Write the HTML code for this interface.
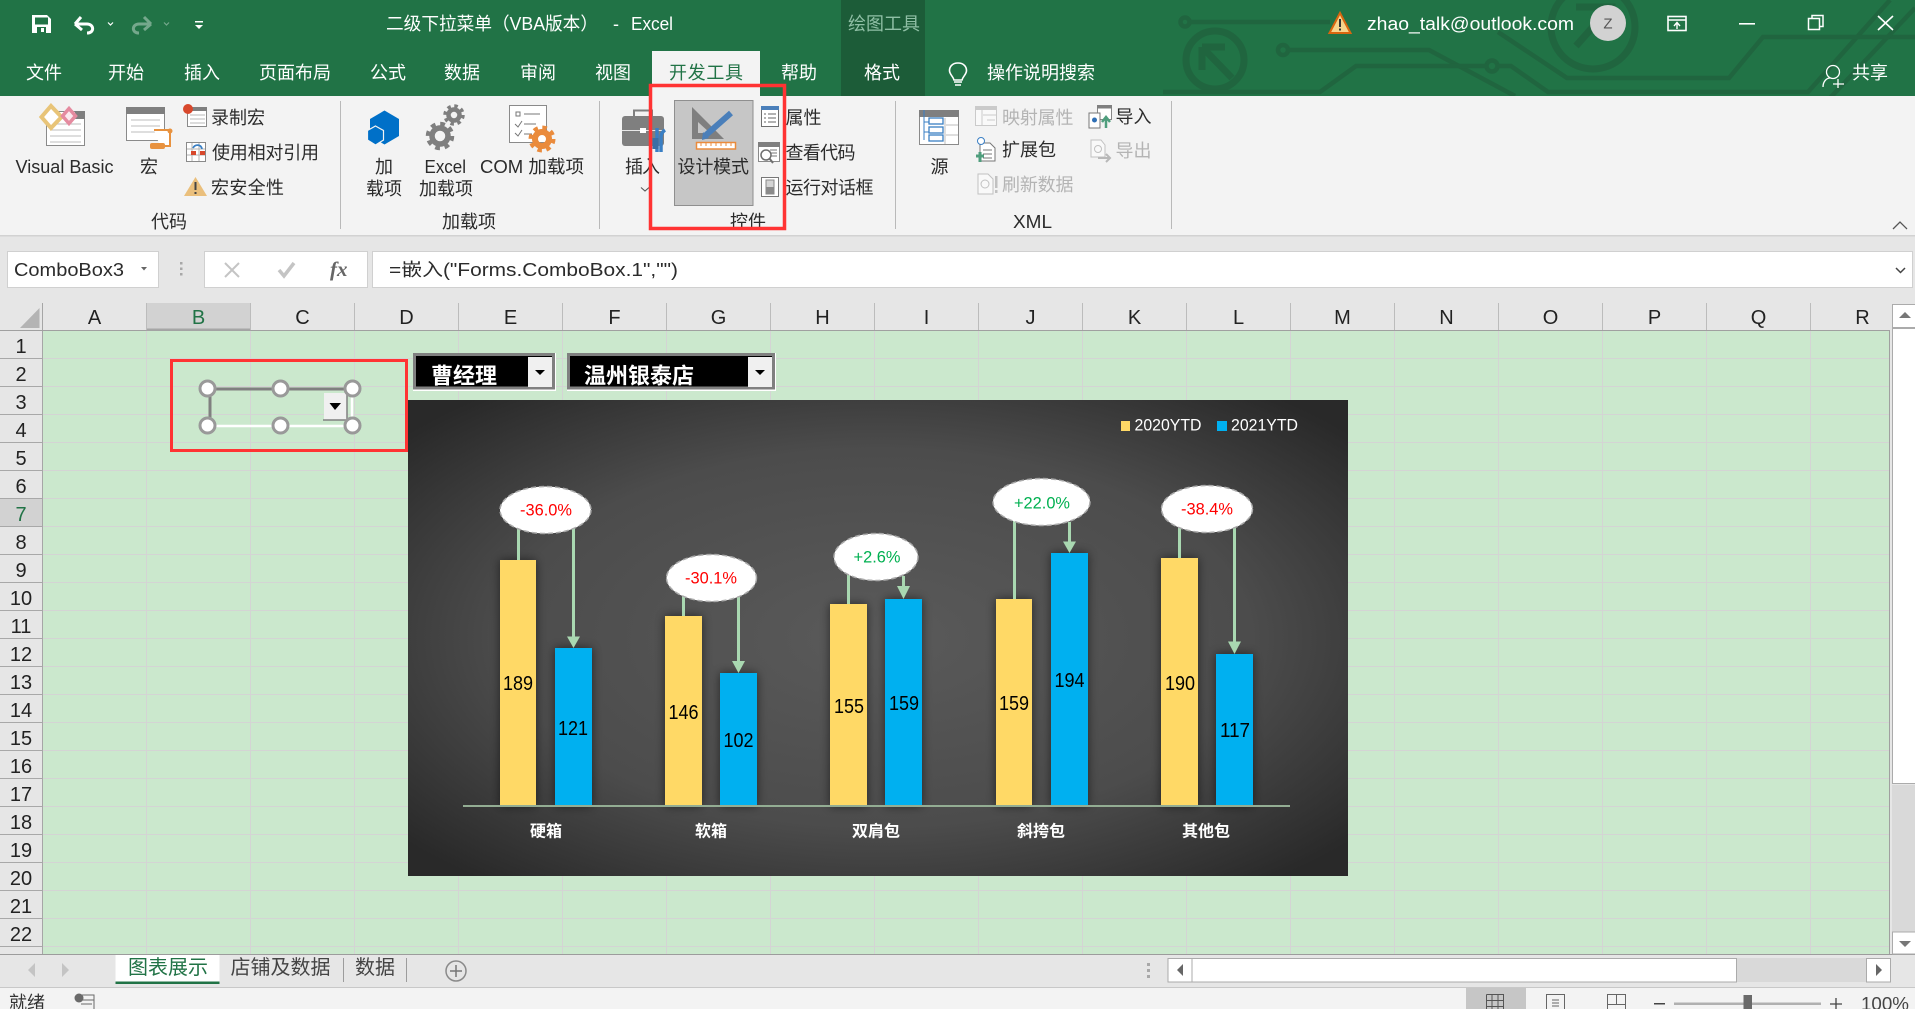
<!DOCTYPE html>
<html><head><meta charset="utf-8"><title>Excel</title>
<style>
html,body{margin:0;padding:0;background:#e6e6e6;overflow:hidden}
svg{display:block}
text{font-family:"Liberation Sans","Noto Sans CJK SC",sans-serif;dominant-baseline:central;fill:#2b2b2b;font-size:18px}
.w{fill:#fff}.g{fill:#b4b4b4}
.h{font-size:20px;text-anchor:middle;fill:#222}
.v{font-size:20px;fill:#000}
.c{font-size:16px;font-weight:700;fill:#fff}
.p{font-size:17px}
.ln{fill:none;stroke:#20653f;stroke-width:4.5}
.cn{stroke:#a9d8b1;stroke-width:3;fill:none}
.ah{fill:#a9d8b1}
.el{fill:#fff;stroke:#aaa;stroke-width:1.5;stroke-dasharray:5 3}
.hd{fill:#fff;stroke:#999;stroke-width:3}
</style></head><body>
<svg width="1915" height="1009" viewBox="0 0 1915 1009" xmlns="http://www.w3.org/2000/svg">
<defs>
<pattern id="grid" x="43" y="331" width="104" height="28" patternUnits="userSpaceOnUse">
<rect width="104" height="28" fill="#cbe8cd"/>
<rect y="27" width="104" height="1" fill="#d4d4d4"/>
<rect x="103" width="1" height="28" fill="#d4d4d4"/>
</pattern>
<radialGradient id="chartbg" cx=".5" cy=".5" r=".66">
<stop offset="0" stop-color="#5a5a5a"/><stop offset=".6" stop-color="#4c4c4c"/><stop offset="1" stop-color="#292929"/>
</radialGradient>
<filter id="sh" x="-40%" y="-10%" width="180%" height="115%"><feDropShadow dx="0" dy="0" stdDeviation="5" flood-color="#000" flood-opacity=".55"/></filter>
<clipPath id="gc"><rect x="0" y="0" width="1915" height="96"/></clipPath>
</defs>

<!-- base -->
<rect width="1915" height="1009" fill="#e6e6e6"/>
<!-- title bar -->
<rect width="1915" height="96" fill="#217346"/>
<g clip-path="url(#gc)">
<circle class="ln" cx="1185" cy="22" r="4.5"/>
<path class="ln" d="M1190 22H1330"/>
<circle class="ln" cx="1215" cy="60" r="29" style="stroke-width:7"/>
<path class="ln" style="stroke-width:7" d="M1202 47H1225M1202 47V70M1202 47L1232 78"/>
<circle class="ln" cx="1283" cy="50" r="5"/>
<path class="ln" d="M1288 50H1429L1515 96"/>
<circle class="ln" cx="1492" cy="66" r="5.5"/>
<path class="ln" d="M1163 92H1320L1356 66H1487M1497 66H1511L1548 92H1808L1890 0"/>
<path class="ln" d="M1498 32L1567 78H1729L1763 37H1915"/>
<path class="ln" d="M1830 98L1915 8"/>
<circle class="ln" style="stroke-width:7" cx="1593" cy="27" r="42"/>
<path class="ln" style="stroke-width:7" d="M1576 7H1612V40M1606 12L1576 46"/>
</g>
<rect x="841" width="84" height="96" fill="#1c5c38"/>
<rect x="652" y="51" width="108" height="45" fill="#f3f3f3"/>

<!-- QAT -->
<path d="M32 15H47L51 19V33H32Z" fill="#fff"/><rect x="35" y="17.500" width="13" height="7" fill="#217346"/><rect x="37" y="27" width="9" height="6" fill="#217346"/><rect x="41" y="28" width="3" height="4" fill="#fff"/>
<path d="M76 26L82 19M76 26H88C95 26 96 35 88 35" transform="translate(-1 -2)" fill="none" stroke="#fff" stroke-width="3"/><path d="M75 24L82 30" fill="none" stroke="#fff" stroke-width="3"/>
<path d="M108 22.500L110.500 25L113 22.500" fill="none" stroke="#fff" stroke-width="1.200"/>
<g opacity=".38"><path d="M151 24L144 17M151 24H139C132 24 131 33 139 33M151 24L144 30" fill="none" stroke="#fff" stroke-width="3"/>
<path d="M164 22.500L166.500 25L169 22.500" fill="none" stroke="#fff" stroke-width="1.200"/></g>
<rect x="195" y="21" width="8" height="1.500" fill="#fff"/><path d="M195 25H203L199 29Z" fill="#fff"/>

<!-- title text -->
<text class="w" x="386" y="24" textLength="212" lengthAdjust="spacingAndGlyphs">二级下拉菜单（VBA版本）</text>
<text class="w" x="613" y="24">-</text>
<text class="w" x="631" y="24" textLength="42" lengthAdjust="spacingAndGlyphs">Excel</text>
<text x="848" y="24" style="fill:#8fbfa5" textLength="72">绘图工具</text>
<!-- warning -->
<path d="M1340 13L1350.500 33H1329.500Z" fill="#f7d48b" stroke="#d9660f" stroke-width="2"/><rect x="1339" y="19" width="2" height="8" fill="#333"/><rect x="1339" y="28.500" width="2" height="2" fill="#333"/>
<text class="w" x="1367" y="24" textLength="207" lengthAdjust="spacingAndGlyphs">zhao_talk@outlook.com</text>
<ellipse cx="1608" cy="23" rx="18" ry="18" fill="#d2d2d2"/>
<text x="1608" y="24" style="fill:#555;text-anchor:middle;font-size:15px">Z</text>
<!-- window controls -->
<rect x="1668" y="16.500" width="18" height="14" fill="none" stroke="#fff" stroke-width="1.600"/><path d="M1668 20H1686" stroke="#fff" stroke-width="1.600"/><path d="M1677 29V23M1674 26L1677 22.500L1680 26" fill="none" stroke="#fff" stroke-width="1.400"/>
<rect x="1739" y="23" width="16" height="1.600" fill="#fff"/>
<rect x="1808.500" y="18.500" width="11" height="11" fill="none" stroke="#fff" stroke-width="1.500"/><path d="M1812 18V15.500H1823V26.500H1820" fill="none" stroke="#fff" stroke-width="1.500"/>
<path d="M1878 16L1893 30M1893 16L1878 30" stroke="#fff" stroke-width="1.600"/>

<!-- menu -->
<g class="m">
<text class="w" x="26" y="73">文件</text>
<text class="w" x="108" y="73">开始</text>
<text class="w" x="184" y="73">插入</text>
<text class="w" x="259" y="73">页面布局</text>
<text class="w" x="370" y="73">公式</text>
<text class="w" x="444" y="73">数据</text>
<text class="w" x="520" y="73">审阅</text>
<text class="w" x="595" y="73">视图</text>
<text x="669" y="73" style="fill:#217346" textLength="74">开发工具</text>
<text class="w" x="781" y="73">帮助</text>
<text class="w" x="864" y="73">格式</text>
<text class="w" x="987" y="73">操作说明搜索</text>
<text class="w" x="1852" y="73">共享</text>
</g>
<path d="M958 63C952 63 949.500 67 949.500 70.500C949.500 74.500 953 76 954 80H962C963 76 966.500 74.500 966.500 70.500C966.500 67 964 63 958 63Z" fill="none" stroke="#fff" stroke-width="1.600"/><path d="M954 82H962M955 85H961" stroke="#fff" stroke-width="1.500"/>
<circle cx="1833" cy="72" r="6.500" fill="none" stroke="#fff" stroke-width="1.300"/><path d="M1823 87C1823 81 1827 78 1830 78" fill="none" stroke="#fff" stroke-width="1.300"/><path d="M1838 84H1844M1838 79V88M1833 84H1844" stroke="#fff" stroke-width="1.300"/>

<!-- ribbon -->
<rect y="96" width="1915" height="139" fill="#f3f3f3"/>
<rect y="235" width="1915" height="1.500" fill="#d2d2d2"/>
<g fill="#b9b9b9">
<rect x="340" y="101" width="1" height="128"/><rect x="599" y="101" width="1" height="128"/><rect x="895" y="101" width="1" height="128"/><rect x="1171" y="101" width="1" height="128"/>
</g>

<!-- Visual Basic icon -->
<rect x="46.500" y="111.500" width="38" height="34" fill="#fff" stroke="#8a8a8a"/><rect x="75" y="111" width="10" height="8" fill="#7f7f7f"/>
<path d="M50 124H81M50 130H81M50 136H81M50 142H81" stroke="#bdbdbd"/>
<path d="M51 106L61.500 117L51 128L41.500 117Z" fill="#fff" stroke="#e8c478" stroke-width="4"/>
<path d="M69 108.500L75.500 116L69 123.500L62.500 116Z" fill="#fbe9ee" stroke="#e58ba0" stroke-width="3.500"/>
<!-- Macro icon -->
<rect x="126.500" y="107.500" width="38" height="33" fill="#fff" stroke="#8a8a8a"/><rect x="126" y="107" width="39" height="7" fill="#7f7f7f"/>
<path d="M131 120H160M131 126H160M131 132H160" stroke="#bdbdbd"/>
<path d="M154 130H170V146H160" fill="#fff" stroke="#e8923f" stroke-width="2"/><rect x="150" y="143" width="15" height="6" rx="2" fill="#e8923f"/>
<circle cx="170" cy="131" r="2.500" fill="#e8923f"/>
<!-- Record -->
<rect x="187.500" y="108.500" width="19" height="18" fill="#fff" stroke="#8a8a8a"/><rect x="187" y="107" width="20" height="4" fill="#7f7f7f"/><path d="M190 115H205M190 119H205M190 123H205" stroke="#b8b8b8"/>
<circle cx="188" cy="109" r="5" fill="#d8482c"/>
<text x="211" y="118" textLength="54">录制宏</text>
<!-- Relative -->
<rect x="186.500" y="142.500" width="19" height="19" fill="#fff" stroke="#8a8a8a"/><path d="M192 143V161M199 143V161M187 149H205M187 155H205" stroke="#b3b3b3"/>
<rect x="191" y="151" width="5" height="4" fill="#d8482c"/><rect x="200" y="151" width="5" height="4" fill="#d8482c"/>
<path d="M193 148C195 144 201 144 202 149" fill="none" stroke="#3a7fc4" stroke-width="1.800"/>
<text x="212" y="153" textLength="107">使用相对引用</text>
<!-- Warning -->
<path d="M195.500 177L207 196H184Z" fill="#eabf7c"/><rect x="194.500" y="182" width="2" height="8" fill="#444"/><rect x="194.500" y="192" width="2" height="2" fill="#444"/>
<text x="211" y="188" textLength="73">宏安全性</text>
<text x="15.500" y="167" textLength="98" lengthAdjust="spacingAndGlyphs">Visual Basic</text>
<text x="140" y="167">宏</text>
<text x="151" y="222">代码</text>

<!-- Add-ins -->
<path d="M384.500 110.500L399 119V136L384.500 144.500L370 136V119Z" fill="#0070c8"/>
<path d="M375.500 126L383.500 130.500V140L375.500 145L367.500 140V130.500Z" fill="#0070c8" stroke="#f3f3f3" stroke-width="1.200"/>
<text x="375" y="167">加</text><text x="366" y="189">载项</text>
<g fill="none" stroke="#7f7f7f">
<circle cx="440" cy="136" r="8" stroke-width="5.500"/><circle cx="440" cy="136" r="12" stroke-width="4.500" stroke-dasharray="4.700 4.700"/>
<circle cx="454" cy="115" r="5.500" stroke-width="4.500"/><circle cx="454" cy="115" r="9" stroke-width="3.500" stroke-dasharray="3.500 3.570"/>
</g>
<text x="424.500" y="167" textLength="41.500" lengthAdjust="spacingAndGlyphs">Excel</text><text x="419" y="189">加载项</text>
<rect x="509.500" y="105.500" width="37" height="37" fill="#fff" stroke="#8a8a8a"/>
<rect x="516" y="112" width="4" height="4" fill="#fff" stroke="#777"/><path d="M524 114H540M524 124H536M524 134H532" stroke="#777"/>
<path d="M515 124L518 127L522 121M515 133L518 136L522 130" fill="none" stroke="#777"/>
<g fill="none" stroke="#ea8b3c"><circle cx="542" cy="139" r="7" stroke-width="6"/><circle cx="542" cy="139" r="11.500" stroke-width="4" stroke-dasharray="4.500 4.530"/></g>
<text x="480" y="167" textLength="104" lengthAdjust="spacingAndGlyphs">COM 加载项</text>
<text x="442" y="222">加载项</text>

<!-- Controls -->
<rect x="622" y="116" width="42" height="30" rx="3" fill="#7f7f7f"/><path d="M634 116V110.500H652V116" fill="none" stroke="#7f7f7f" stroke-width="2"/><rect x="622" y="130" width="42" height="1" fill="#e8e8e8"/><rect x="640" y="128" width="6" height="5" fill="#fff"/>
<path d="M657 128V152M665 130C662 132 661 134 661 137V152" fill="none" stroke="#3a7fc4" stroke-width="3.500"/><rect x="652.500" y="138" width="6" height="11" fill="#3a6fa5"/>
<text x="625" y="167" textLength="35">插入</text>
<path d="M641 187.500L645 191L649 187.500" fill="none" stroke="#555" stroke-width="1.100"/>
<rect x="674.500" y="100.500" width="78.500" height="105" fill="#c6c6c6" stroke="#8f8f8f"/>
<path fill-rule="evenodd" d="M692 107V139H724ZM698 122V133H710Z" fill="#7f7f7f"/>
<path d="M706 135L731 113" stroke="#4a7fba" stroke-width="6"/><path d="M702 140L703 132L709 138Z" fill="#4a7fba"/>
<rect x="696.500" y="142.500" width="39" height="6.500" fill="#fff" stroke="#ea8b3c" stroke-width="1.500"/><path d="M701 143V146M706 143V146M711 143V146M716 143V146M721 143V146M726 143V146M731 143V146" stroke="#ea8b3c"/>
<text x="677.500" y="167" textLength="71.500">设计模式</text>
<rect x="761.500" y="106.500" width="17" height="20" fill="#fff" stroke="#6f6f6f"/><rect x="761" y="106" width="18" height="4" fill="#4a7fba"/><path d="M764 114H766M768 114H776M764 118H766M768 118H776M764 122H766M768 122H776" stroke="#666"/>
<rect x="758.500" y="142.500" width="21" height="19" fill="#fff" stroke="#8a8a8a"/><rect x="758" y="142" width="22" height="5" fill="#7f7f7f"/><path d="M770 150H777M770 153H777M770 156H777" stroke="#777"/>
<circle cx="766" cy="155" r="5" fill="#fff" stroke="#6f6f6f" stroke-width="1.500"/><path d="M769.500 158.500L773 163" stroke="#6f6f6f" stroke-width="2"/>
<rect x="761.500" y="177.500" width="17" height="19" fill="#fff" stroke="#777"/><rect x="766" y="180" width="8" height="14" fill="#d4d4d4" stroke="#888"/><rect x="766" y="187" width="8" height="7" fill="#8a8a8a"/>
<text x="785.500" y="118">属性</text>
<text x="785.500" y="153" textLength="70">查看代码</text>
<text x="785.500" y="188" textLength="88">运行对话框</text>
<text x="730" y="222">控件</text>

<!-- XML -->
<rect x="919.500" y="110.500" width="39" height="34" fill="#fff" stroke="#8a8a8a"/><rect x="919" y="110" width="40" height="7" fill="#7f7f7f"/>
<path d="M945 118V144M946 125H958M946 135H958" stroke="#bdbdbd"/>
<path d="M924 110V140M924 122H929M924 132H929" stroke="#3a7fc4"/>
<g fill="#fff" stroke="#3a7fc4" stroke-width="1.300"><rect x="929" y="118" width="14" height="6"/><rect x="929" y="127" width="14" height="6"/><rect x="929" y="135" width="14" height="6"/></g>
<text x="930.500" y="167">源</text>
<g opacity=".55">
<rect x="975.500" y="106.500" width="21" height="19" fill="#fff" stroke="#aaa"/><rect x="975" y="106" width="22" height="4" fill="#aaa"/><path d="M982 110V126M983 115H997M987 120H995" stroke="#aaa"/>
</g>
<text class="g" x="1002" y="118" textLength="71.500">映射属性</text>
<path d="M980 143H990L995 148V161H980Z" fill="#fff" stroke="#777"/><path d="M983 150H992M983 154H992M983 158H992" stroke="#777"/><circle cx="981" cy="141" r="3.500" fill="#fff" stroke="#3a7fc4"/><path d="M976 156H984M980 152V162" stroke="#4f9e7d" stroke-width="3"/>
<text x="1002" y="150">扩展包</text>
<g opacity=".55"><path d="M978 174H988L993 179V194H978Z" fill="#fff" stroke="#999"/><circle cx="985" cy="184" r="4" fill="none" stroke="#999"/><rect x="995" y="176" width="2.500" height="12" fill="#999"/><rect x="995" y="190" width="2.500" height="3" fill="#999"/></g>
<text class="g" x="1002" y="185" textLength="71.500">刷新数据</text>
<rect x="1097.500" y="105.500" width="14" height="14" fill="#fff" stroke="#888"/><rect x="1097" y="105" width="15" height="3.500" fill="#7f7f7f"/><path d="M1089 113H1100V128H1089Z" fill="#fff" stroke="#777"/><circle cx="1094.500" cy="120" r="2.500" fill="#2f6fb5"/><path d="M1106 128V118M1102 122L1106 117L1110 122" fill="none" stroke="#4f9e7d" stroke-width="2.500"/>
<text x="1115.500" y="117">导入</text>
<g opacity=".55"><path d="M1091 140H1101L1105 145V157H1091Z" fill="#fff" stroke="#999"/><circle cx="1098" cy="149" r="3.500" fill="none" stroke="#999"/><path d="M1098 158H1109M1106 154L1110 158L1106 162" fill="none" stroke="#888" stroke-width="2"/></g>
<text class="g" x="1115.500" y="151">导出</text>
<text x="1013" y="222" textLength="39" lengthAdjust="spacingAndGlyphs">XML</text>
<path d="M1893 229L1900 222L1907 229" fill="none" stroke="#555" stroke-width="1.300"/>

<!-- Formula bar -->
<rect x="7.500" y="251.500" width="151" height="36" fill="#fff" stroke="#d0d0d0"/>
<text x="14" y="270" textLength="110" lengthAdjust="spacingAndGlyphs">ComboBox3</text>
<path d="M141 267H147L144 270.500Z" fill="#666"/>
<rect x="180" y="262" width="2.500" height="2.500" fill="#a8a8a8"/><rect x="180" y="267.500" width="2.500" height="2.500" fill="#a8a8a8"/><rect x="180" y="273" width="2.500" height="2.500" fill="#a8a8a8"/>
<rect x="204.500" y="251.500" width="163" height="36" fill="#fff" stroke="#d0d0d0"/>
<path d="M225 263L239 277M239 263L225 277" stroke="#c4c4c4" stroke-width="2"/>
<path d="M279 270L284 276L294 263" fill="none" stroke="#c4c4c4" stroke-width="3.500"/>
<text x="330" y="269" style="font-family:'Liberation Serif',serif;font-style:italic;font-weight:700;font-size:21px;fill:#666">fx</text>
<rect x="372.500" y="251.500" width="1540" height="36" fill="#fff" stroke="#d0d0d0"/>
<text x="389" y="270" textLength="289" lengthAdjust="spacingAndGlyphs">=嵌入("Forms.ComboBox.1","")</text>
<path d="M1896 268L1900.500 272.500L1905 268" fill="none" stroke="#444" stroke-width="1.500"/>

<!-- Sheet headers -->
<rect x="0" y="303" width="1890" height="28" fill="#e6e6e6"/>
<rect x="146" y="303" width="105" height="27" fill="#d2d2d2"/>
<rect x="0" y="499" width="42" height="28" fill="#d2d2d2"/>
<path d="M39.500 308V328H20Z" fill="#b4b4b4"/>
<!-- grid -->
<rect x="43" y="331" width="1846" height="623" fill="url(#grid)"/>
<rect x="42" y="303" width="1" height="652" fill="#a6a6a6"/>
<rect x="0" y="330" width="1890" height="1" fill="#a0a0a0"/>
<rect x="146" y="328.500" width="105" height="2" fill="#a6a6a6"/>
<rect x="1889" y="330" width="1" height="625" fill="#a0a0a0"/>
<rect x="0" y="954" width="1915" height="1" fill="#9c9c9c"/>
<path d="M146.500 303V330M250.500 303V330M354.500 303V330M458.500 303V330M562.500 303V330M666.500 303V330M770.500 303V330M874.500 303V330M978.500 303V330M1082.500 303V330M1186.500 303V330M1290.500 303V330M1394.500 303V330M1498.500 303V330M1602.500 303V330M1706.500 303V330M1810.500 303V330" stroke="#bcbcbc"/>
<path d="M0 358.500H42M0 386.500H42M0 414.500H42M0 442.500H42M0 470.500H42M0 498.500H42M0 526.500H42M0 554.500H42M0 582.500H42M0 610.500H42M0 638.500H42M0 666.500H42M0 694.500H42M0 722.500H42M0 750.500H42M0 778.500H42M0 806.500H42M0 834.500H42M0 862.500H42M0 890.500H42M0 918.500H42M0 946.500H42" stroke="#a8a8a8"/>
<g>
<text class="h" x="94.500" y="318">A</text><text class="h" x="198.500" y="318" style="fill:#217346">B</text><text class="h" x="302.500" y="318">C</text><text class="h" x="406.500" y="318">D</text><text class="h" x="510.500" y="318">E</text><text class="h" x="614.500" y="318">F</text><text class="h" x="718.500" y="318">G</text><text class="h" x="822.500" y="318">H</text><text class="h" x="926.500" y="318">I</text><text class="h" x="1030.500" y="318">J</text><text class="h" x="1134.500" y="318">K</text><text class="h" x="1238.500" y="318">L</text><text class="h" x="1342.500" y="318">M</text><text class="h" x="1446.500" y="318">N</text><text class="h" x="1550.500" y="318">O</text><text class="h" x="1654.500" y="318">P</text><text class="h" x="1758.500" y="318">Q</text><text class="h" x="1862.500" y="318">R</text>
<text class="h" x="21" y="347">1</text><text class="h" x="21" y="375">2</text><text class="h" x="21" y="403">3</text><text class="h" x="21" y="431">4</text><text class="h" x="21" y="459">5</text><text class="h" x="21" y="487">6</text><text class="h" x="21" y="515" style="fill:#217346">7</text><text class="h" x="21" y="543">8</text><text class="h" x="21" y="571">9</text><text class="h" x="21" y="599">10</text><text class="h" x="21" y="627">11</text><text class="h" x="21" y="655">12</text><text class="h" x="21" y="683">13</text><text class="h" x="21" y="711">14</text><text class="h" x="21" y="739">15</text><text class="h" x="21" y="767">16</text><text class="h" x="21" y="795">17</text><text class="h" x="21" y="823">18</text><text class="h" x="21" y="851">19</text><text class="h" x="21" y="879">20</text><text class="h" x="21" y="907">21</text><text class="h" x="21" y="935">22</text>
</g>

<!-- vertical scrollbar -->
<rect x="1890" y="303" width="25" height="651" fill="#e6e6e6"/>
<rect x="1892.500" y="304.500" width="23" height="23" fill="#fff" stroke="#ababab"/>
<path d="M1899 318H1911L1905 312Z" fill="#777"/>
<rect x="1892.500" y="328.500" width="23" height="455" fill="#fff" stroke="#ababab"/>
<rect x="1892" y="785" width="23" height="147" fill="#d9d9d9"/>
<rect x="1892.500" y="932" width="23" height="22" fill="#fff" stroke="#ababab"/>
<path d="M1899 941H1911L1905 947Z" fill="#777"/>

<!-- Red box + active X control -->
<rect x="171.500" y="360.500" width="235" height="90" fill="none" stroke="#f33" stroke-width="3"/>
<path d="M210 425.500V389H352" fill="none" stroke="#808080" stroke-width="3"/>
<path d="M209 426H352V389" fill="none" stroke="#fff" stroke-width="2.500"/>
<rect x="324" y="393" width="23" height="27" fill="#f0f0f0"/><path d="M323 420H347V393" fill="none" stroke="#808080" stroke-width="1.500"/>
<path d="M329.500 403H341L335 410Z" fill="#000"/>
<ellipse class="hd" cx="207.500" cy="388.500" rx="7.500" ry="7.500"/><ellipse class="hd" cx="280.500" cy="388.500" rx="7.500" ry="7.500"/><ellipse class="hd" cx="352.500" cy="388.500" rx="7.500" ry="7.500"/>
<ellipse class="hd" cx="207.500" cy="425.500" rx="7.500" ry="7.500"/><ellipse class="hd" cx="280.500" cy="425.500" rx="7.500" ry="7.500"/><ellipse class="hd" cx="352.500" cy="425.500" rx="7.500" ry="7.500"/>

<!-- Combos -->
<rect x="413" y="353" width="143" height="38" fill="#fff"/>
<rect x="414.500" y="354.500" width="139" height="33.500" fill="#000" stroke="#808080" stroke-width="3"/>
<rect x="528" y="357" width="24" height="30" fill="#f0f0f0"/><rect x="528" y="387" width="24" height="2" fill="#808080"/>
<path d="M535 370H545L540 375Z" fill="#000"/>
<text x="431" y="376" style="font-size:22px;font-weight:700;fill:#fff">曹经理</text>
<rect x="567" y="353" width="209" height="38" fill="#fff"/>
<rect x="568.500" y="354.500" width="205" height="33.500" fill="#000" stroke="#808080" stroke-width="3"/>
<rect x="748" y="357" width="24" height="30" fill="#f0f0f0"/><rect x="748" y="387" width="24" height="2" fill="#808080"/>
<path d="M755 370H765L760 375Z" fill="#000"/>
<text x="584" y="376" style="font-size:22px;font-weight:700;fill:#fff">温州银泰店</text>

<!-- Chart -->
<rect x="408" y="400" width="940" height="476" fill="url(#chartbg)"/>
<rect x="1121" y="421" width="9" height="10" fill="#ffd966"/>
<text class="p w" x="1134.500" y="425" textLength="67" lengthAdjust="spacingAndGlyphs">2020YTD</text>
<rect x="1217" y="421" width="10" height="10" fill="#00b0f0"/>
<text class="p w" x="1231" y="425" textLength="67" lengthAdjust="spacingAndGlyphs">2021YTD</text>
<g filter="url(#sh)">
<rect x="500" y="560" width="36" height="246" fill="#ffd966"/>
<rect x="555" y="648" width="37" height="158" fill="#00b0f0"/>
<rect x="665" y="616" width="37" height="190" fill="#ffd966"/>
<rect x="720" y="673" width="37" height="133" fill="#00b0f0"/>
<rect x="830" y="604" width="37" height="202" fill="#ffd966"/>
<rect x="885" y="599" width="37" height="207" fill="#00b0f0"/>
<rect x="996" y="599" width="36" height="207" fill="#ffd966"/>
<rect x="1051" y="553" width="37" height="253" fill="#00b0f0"/>
<rect x="1161" y="558" width="37" height="248" fill="#ffd966"/>
<rect x="1216" y="654" width="37" height="152" fill="#00b0f0"/>
</g>
<rect x="463" y="805" width="827" height="2" fill="#93ad93"/>
<!-- connectors -->
<path class="cn" d="M518.500 528V560M573.500 528V638M683.500 596V616M738.500 597V662M848.500 575V604M903.500 576V588M1014.500 520V599M1069.500 522V543M1179.500 527V558M1234.500 528V643"/>
<path class="ah" d="M567 636.500H580L573.500 648Z"/>
<path class="ah" d="M732 661H745L738.500 673Z"/>
<path class="ah" d="M897 586H910L903.500 599Z"/>
<path class="ah" d="M1063 541.500H1076L1069.500 553Z"/>
<path class="ah" d="M1228 641.500H1241L1234.500 654Z"/>
<ellipse class="el" cx="545.500" cy="510" rx="45.500" ry="23.500"/>
<ellipse class="el" cx="711.500" cy="578" rx="45" ry="23.500"/>
<ellipse class="el" cx="876" cy="557" rx="42" ry="23.500"/>
<ellipse class="el" cx="1041.500" cy="502" rx="48.500" ry="23.500"/>
<ellipse class="el" cx="1207" cy="509" rx="45.500" ry="23.500"/>
<text class="p" x="520" y="510" textLength="52" lengthAdjust="spacingAndGlyphs" style="fill:#f00">-36.0%</text>
<text class="p" x="685" y="578" textLength="52" lengthAdjust="spacingAndGlyphs" style="fill:#f00">-30.1%</text>
<text class="p" x="853.500" y="557" textLength="47" lengthAdjust="spacingAndGlyphs" style="fill:#00b050">+2.6%</text>
<text class="p" x="1014" y="503" textLength="56" lengthAdjust="spacingAndGlyphs" style="fill:#00b050">+22.0%</text>
<text class="p" x="1181" y="509" textLength="52" lengthAdjust="spacingAndGlyphs" style="fill:#f00">-38.4%</text>
<text class="v" x="503" y="684" textLength="30" lengthAdjust="spacingAndGlyphs">189</text>
<text class="v" x="558" y="729" textLength="30" lengthAdjust="spacingAndGlyphs">121</text>
<text class="v" x="668.500" y="713" textLength="30" lengthAdjust="spacingAndGlyphs">146</text>
<text class="v" x="723.500" y="741" textLength="30" lengthAdjust="spacingAndGlyphs">102</text>
<text class="v" x="834" y="707" textLength="30" lengthAdjust="spacingAndGlyphs">155</text>
<text class="v" x="889" y="704" textLength="30" lengthAdjust="spacingAndGlyphs">159</text>
<text class="v" x="999" y="704" textLength="30" lengthAdjust="spacingAndGlyphs">159</text>
<text class="v" x="1054.500" y="681" textLength="30" lengthAdjust="spacingAndGlyphs">194</text>
<text class="v" x="1165" y="684" textLength="30" lengthAdjust="spacingAndGlyphs">190</text>
<text class="v" x="1220" y="731" textLength="30" lengthAdjust="spacingAndGlyphs">117</text>
<text class="c" x="530" y="832">硬箱</text>
<text class="c" x="695" y="832">软箱</text>
<text class="c" x="852" y="832">双肩包</text>
<text class="c" x="1017" y="832">斜挎包</text>
<text class="c" x="1182" y="832">其他包</text>

<!-- Red box around design mode -->
<rect x="650.500" y="85.500" width="134" height="143" fill="none" stroke="#f33" stroke-width="3.500"/>

<!-- Sheet tabs -->
<path d="M35 963V977L28 970ZM62 963V977L69 970Z" fill="#c4c4c4"/>
<rect x="115.500" y="955" width="104" height="27" fill="#fff"/><rect x="115.500" y="981.500" width="104" height="2.500" fill="#217346"/>
<text x="128" y="968" style="font-size:20px;fill:#217346">图表展示</text>
<text x="230.500" y="968" style="font-size:20px;fill:#444">店铺及数据</text>
<rect x="343" y="958" width="1" height="24" fill="#9c9c9c"/>
<text x="355" y="968" style="font-size:20px;fill:#444">数据</text>
<rect x="406" y="958" width="1" height="24" fill="#9c9c9c"/>
<circle cx="456" cy="971" r="10" fill="none" stroke="#8a8a8a" stroke-width="1.500"/><path d="M450 971H462M456 965V977" stroke="#777" stroke-width="1.500"/>
<!-- H scrollbar -->
<rect x="1147" y="963" width="3" height="3" fill="#a8a8a8"/><rect x="1147" y="969" width="3" height="3" fill="#a8a8a8"/><rect x="1147" y="975" width="3" height="3" fill="#a8a8a8"/>
<rect x="1737" y="958" width="130" height="24" fill="#d9d9d9"/>
<rect x="1168" y="958.500" width="24" height="23.500" fill="#fff" stroke="#ababab"/>
<path d="M1183 964V976L1177 970Z" fill="#666"/>
<rect x="1192" y="958.500" width="544.500" height="23.500" fill="#fff" stroke="#ababab"/>
<rect x="1866.500" y="958.500" width="24" height="23.500" fill="#fff" stroke="#ababab"/>
<path d="M1876 964V976L1882 970Z" fill="#666"/>

<!-- Status bar -->
<rect y="987" width="1915" height="22" fill="#f3f3f3"/><rect y="987" width="1915" height="1" fill="#c8c8c8"/>
<text x="9" y="1003" style="fill:#333">就绪</text>
<circle cx="79" cy="998" r="4.500" fill="#6a6a6a"/><path d="M78 995H94V1009M78 1000H94M81 1004H92" fill="none" stroke="#6a6a6a"/>
<rect x="1466" y="988" width="60" height="21" fill="#c6c6c6"/>
<path d="M1486.500 994.500H1503.500V1009M1486.500 994.500V1009M1492 995V1009M1498 995V1009M1487 1000.500H1503M1487 1006.500H1503" fill="none" stroke="#555"/>
<path d="M1546.500 1009V994.500H1564.500V1009M1552 1000H1559M1552 1003H1559M1552 1006H1559" fill="none" stroke="#666"/>
<path d="M1607.500 1009V994.500H1625.500V1009M1616.500 995V1004M1608 1004.500H1625" fill="none" stroke="#666"/>
<rect x="1654" y="1003" width="11" height="1.500" fill="#444"/>
<rect x="1674" y="1002.500" width="147" height="2.500" fill="#b0b0b0"/>
<rect x="1743.500" y="995" width="8.500" height="14" fill="#6a6a6a"/>
<path d="M1830 1004H1842M1836 998V1009" stroke="#444" stroke-width="1.300"/>
<text x="1861" y="1004" textLength="48" lengthAdjust="spacingAndGlyphs" style="fill:#444">100%</text>
</svg>
</body></html>
